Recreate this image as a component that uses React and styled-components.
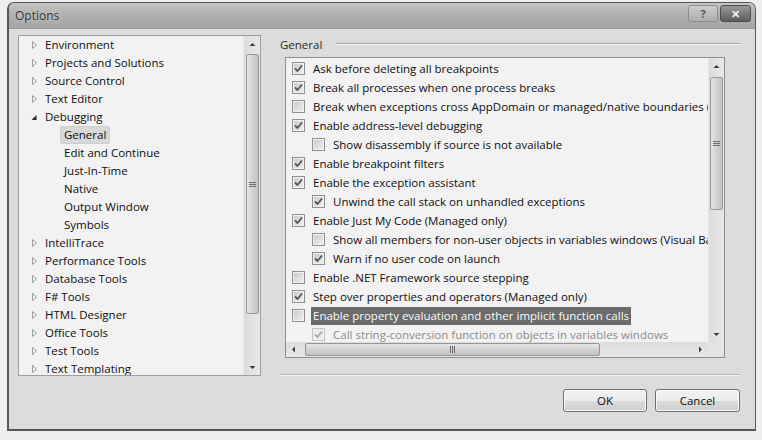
import React from "react";
import styled, { createGlobalStyle } from "styled-components";

const treeItems = [
  { label: "Environment", depth: 0, state: "closed" },
  { label: "Projects and Solutions", depth: 0, state: "closed" },
  { label: "Source Control", depth: 0, state: "closed" },
  { label: "Text Editor", depth: 0, state: "closed" },
  { label: "Debugging", depth: 0, state: "open" },
  { label: "General", depth: 1, selected: true },
  { label: "Edit and Continue", depth: 1 },
  { label: "Just-In-Time", depth: 1 },
  { label: "Native", depth: 1 },
  { label: "Output Window", depth: 1 },
  { label: "Symbols", depth: 1 },
  { label: "IntelliTrace", depth: 0, state: "closed" },
  { label: "Performance Tools", depth: 0, state: "closed" },
  { label: "Database Tools", depth: 0, state: "closed" },
  { label: "F# Tools", depth: 0, state: "closed" },
  { label: "HTML Designer", depth: 0, state: "closed" },
  { label: "Office Tools", depth: 0, state: "closed" },
  { label: "Test Tools", depth: 0, state: "closed" },
  { label: "Text Templating", depth: 0, state: "closed" },
];

const options = [
  { label: "Ask before deleting all breakpoints", checked: true },
  { label: "Break all processes when one process breaks", checked: true },
  {
    label:
      "Break when exceptions cross AppDomain or managed/native boundaries (Managed only)",
  },
  { label: "Enable address-level debugging", checked: true },
  { label: "Show disassembly if source is not available", indent: 1 },
  { label: "Enable breakpoint filters", checked: true },
  { label: "Enable the exception assistant", checked: true },
  { label: "Unwind the call stack on unhandled exceptions", indent: 1, checked: true },
  { label: "Enable Just My Code (Managed only)", checked: true },
  {
    label:
      "Show all members for non-user objects in variables windows (Visual Basic only)",
    indent: 1,
  },
  { label: "Warn if no user code on launch", indent: 1, checked: true },
  { label: "Enable .NET Framework source stepping" },
  { label: "Step over properties and operators (Managed only)", checked: true },
  { label: "Enable property evaluation and other implicit function calls", selected: true },
  {
    label: "Call string-conversion function on objects in variables windows",
    indent: 1,
    checked: true,
    disabled: true,
  },
];

const Expander = ({ state }) => (
  <ExpanderBox>
    {state === "open" && (
      <svg width="10" height="10" viewBox="0 0 10 10">
        <path d="M7.5 3 L7.5 8 L2.5 8 Z" fill="#2a2a2a" />
      </svg>
    )}
    {state === "closed" && (
      <svg width="10" height="10" viewBox="0 0 10 10">
        <path d="M3.5 1.5 L7.5 5 L3.5 8.5 Z" fill="#f4f4f4" stroke="#9a9a9a" />
      </svg>
    )}
  </ExpanderBox>
);

const Arrow = ({ dir }) => {
  const paths = {
    up: "M0.5 4 L3.5 1 L6.5 4 Z",
    down: "M0.5 1 L3.5 4 L6.5 1 Z",
    left: "M4 0.5 L1 3.5 L4 6.5 Z",
    right: "M1 0.5 L4 3.5 L1 6.5 Z",
  };
  const vertical = dir === "up" || dir === "down";
  return (
    <ArrowButton>
      <svg
        width={vertical ? 7 : 5}
        height={vertical ? 5 : 7}
        viewBox={vertical ? "0 0 7 5" : "0 0 5 7"}
      >
        <path d={paths[dir]} fill="#3c3c3c" />
      </svg>
    </ArrowButton>
  );
};

const Grip = ({ vertical }) => (
  <svg width="7" height="7" viewBox="0 0 7 7">
    {vertical ? (
      <path d="M0 1.5 H7 M0 3.5 H7 M0 5.5 H7" stroke="#6a6a6a" strokeWidth="1" />
    ) : (
      <path d="M1.5 0 V7 M3.5 0 V7 M5.5 0 V7" stroke="#6a6a6a" strokeWidth="1" />
    )}
  </svg>
);

const Check = ({ checked, disabled }) => (
  <CheckBox $disabled={disabled}>
    {checked && (
      <svg width="11" height="11" viewBox="0 0 11 11">
        <path
          d="M2 5.5 L4.5 8 L9 2.5"
          fill="none"
          stroke={disabled ? "#a8a8a8" : "#555555"}
          strokeWidth="1.8"
        />
      </svg>
    )}
  </CheckBox>
);

const App = () => {
  return (
    <Page>
      <GlobalStyle />
      <Window>
        <TitleBar>
          <Title>Options</Title>
          <CaptionButton>?</CaptionButton>
          <CaptionButton $close>✕</CaptionButton>
        </TitleBar>
        <Body>
          <Tree>
            <TreeList>
              {treeItems.map((item) => (
                <TreeRow key={item.label} $depth={item.depth}>
                  <Expander state={item.state} />
                  <TreeLabel $selected={item.selected}>{item.label}</TreeLabel>
                </TreeRow>
              ))}
            </TreeList>
            <VScroll>
              <Arrow dir="up" />
              <VThumb $size={260} $offset={2}>
                <Grip vertical />
              </VThumb>
              <Track />
              <Arrow dir="down" />
            </VScroll>
          </Tree>
          <RightPane>
            <SectionHeader>
              <span>General</span>
              <Rule />
            </SectionHeader>
            <ListBox>
              <CheckList>
                {options.map((opt) => (
                  <CheckRow key={opt.label} $indent={opt.indent || 0}>
                    <Check checked={opt.checked} disabled={opt.disabled} />
                    <CheckLabel $selected={opt.selected} $disabled={opt.disabled}>
                      {opt.label}
                    </CheckLabel>
                  </CheckRow>
                ))}
              </CheckList>
              <VScroll $inList>
                <Arrow dir="up" />
                <VThumb $size={133} $offset={3}>
                  <Grip vertical />
                </VThumb>
                <Track />
                <Arrow dir="down" />
              </VScroll>
              <HScroll>
                <Arrow dir="left" />
                <HThumb $size={295} $offset={4}>
                  <Grip />
                </HThumb>
                <Track />
                <Arrow dir="right" />
              </HScroll>
              <Corner />
            </ListBox>
            <Separator />
          </RightPane>
          <Footer>
            <Button $width={84}>OK</Button>
            <Button $width={85}>Cancel</Button>
          </Footer>
        </Body>
      </Window>
    </Page>
  );
};

export default App;

const GlobalStyle = createGlobalStyle`
  html, body {
    margin: 0;
    padding: 0;
    background: #efefef;
  }
  body {
    font-family: "Open Sans", "Liberation Sans", sans-serif;
    font-size: 11.5px;
    color: #0e0e0e;
  }
`;

const Page = styled.div`
  width: 762px;
  height: 440px;
  box-sizing: border-box;
  padding: 2px 0 0 7px;
  overflow: hidden;
`;

const Window = styled.div`
  width: 749px;
  height: 429px;
  box-sizing: border-box;
  display: flex;
  flex-direction: column;
  border: 1px solid #565656;
  border-left-width: 2px;
  border-bottom-width: 2px;
  border-radius: 7px 7px 0 0;
  background: #dcdcdc;
  overflow: hidden;
`;

const TitleBar = styled.div`
  height: 26px;
  flex-shrink: 0;
  display: flex;
  align-items: center;
  gap: 2px;
  padding: 0 4px 0 6px;
  background: linear-gradient(#c6c6c6, #b2b2b2 40%, #a4a4a4);
  border-bottom: 1px solid #999;
  box-sizing: border-box;
`;

const Title = styled.div`
  flex: 1;
  color: #333;
  font-size: 12px;
  text-shadow: 0 0 4px #dcdcdc;
`;

const CaptionButton = styled.div`
  width: ${(p) => (p.$close ? 31 : 30)}px;
  height: 17px;
  margin-top: -4px;
  box-sizing: border-box;
  display: flex;
  align-items: center;
  justify-content: center;
  border: 1px solid ${(p) => (p.$close ? "#4e4e4e" : "#8c8c8c")};
  border-radius: 3px;
  font-size: ${(p) => (p.$close ? 11 : 11)}px;
  font-weight: 700;
  color: ${(p) => (p.$close ? "#f4f4f4" : "#555")};
  background: ${(p) =>
    p.$close
      ? "linear-gradient(#999, #7a7a7a 50%, #5e5e5e)"
      : "linear-gradient(#cdcdcd, #bdbdbd 50%, #adadad)"};
`;

const Body = styled.div`
  flex: 1;
  display: grid;
  grid-template-columns: 243px 460px;
  grid-template-rows: 341px auto;
  column-gap: 19px;
  padding: 6px 0 0 9px;
`;

const Tree = styled.div`
  display: flex;
  border: 1px solid #9e9e9e;
  background: #f2f2f2;
  overflow: hidden;
`;

const TreeList = styled.div`
  flex: 1;
  overflow: hidden;
`;

const TreeRow = styled.div`
  height: 18px;
  display: flex;
  align-items: center;
  padding-left: ${(p) => (p.$depth ? 29 : 10)}px;
  white-space: nowrap;
`;

const ExpanderBox = styled.span`
  width: 10px;
  height: 10px;
  display: flex;
  flex-shrink: 0;
  margin-right: 3px;
`;

const TreeLabel = styled.span`
  padding: 0 3px;
  height: 16px;
  line-height: 16px;
  border: 1px solid ${(p) => (p.$selected ? "#cfcfcf" : "transparent")};
  border-radius: 2px;
  margin-left: -1px;
  background: ${(p) => (p.$selected ? "#d8d8d8" : "transparent")};
`;

const VScroll = styled.div`
  width: ${(p) => (p.$inList ? 16 : 17)}px;
  display: flex;
  flex-direction: column;
  align-items: center;
  background: linear-gradient(90deg, #dcdcdc, #e8e8e8);
  border-left: 1px solid #e6e6e6;
  box-sizing: border-box;
`;

const HScroll = styled.div`
  height: 15px;
  display: flex;
  align-items: center;
  background: linear-gradient(#dcdcdc, #e8e8e8);
`;

const Corner = styled.div`
  background: #e4e4e4;
`;

const ArrowButton = styled.div`
  width: 15px;
  height: 16px;
  display: flex;
  align-items: center;
  justify-content: center;
  flex-shrink: 0;
`;

const Track = styled.div`
  flex: 1;
`;

const VThumb = styled.div`
  width: 13px;
  height: ${(p) => p.$size}px;
  margin-top: ${(p) => p.$offset}px;
  box-sizing: border-box;
  display: flex;
  align-items: center;
  justify-content: center;
  border: 1px solid #969696;
  border-radius: 2px;
  background: linear-gradient(90deg, #e6e6e6, #d2d2d2 50%, #c2c2c2);
`;

const HThumb = styled.div`
  height: 13px;
  width: ${(p) => p.$size}px;
  margin-left: ${(p) => p.$offset}px;
  box-sizing: border-box;
  display: flex;
  align-items: center;
  justify-content: center;
  border: 1px solid #969696;
  border-radius: 2px;
  background: linear-gradient(#e6e6e6, #d2d2d2 50%, #c2c2c2);
`;

const RightPane = styled.div`
  display: flex;
  flex-direction: column;
`;

const SectionHeader = styled.div`
  height: 18px;
  display: flex;
  align-items: center;
  gap: 14px;
  margin-bottom: 4px;
  color: #2a2a2a;
`;

const Rule = styled.div`
  flex: 1;
  border-top: 1px solid #a4a4a4;
  border-bottom: 1px solid #f6f6f6;
`;

const ListBox = styled.div`
  margin-left: 5px;
  width: 440px;
  height: 301px;
  box-sizing: border-box;
  border: 1px solid #8e8e8e;
  background: #f2f2f2;
  display: grid;
  grid-template-columns: 1fr 16px;
  grid-template-rows: 1fr 15px;
  overflow: hidden;
`;

const CheckList = styled.div`
  overflow: hidden;
  padding-top: 1px;
  min-width: 0;
`;

const CheckRow = styled.div`
  height: 19px;
  display: flex;
  align-items: center;
  padding-left: ${(p) => 6 + p.$indent * 20}px;
  white-space: nowrap;
`;

const CheckBox = styled.span`
  width: 13px;
  height: 13px;
  flex-shrink: 0;
  box-sizing: border-box;
  display: flex;
  align-items: center;
  justify-content: center;
  border: 1px solid ${(p) => (p.$disabled ? "#c2c2c2" : "#8f8f8f")};
  background: ${(p) =>
    p.$disabled
      ? "#ececec"
      : "linear-gradient(135deg, #c8c8c8, #e0e0e0 60%, #efefef)"};
  box-shadow: inset 0 0 0 1px #f2f2f2;
  margin-right: 6px;
`;

const CheckLabel = styled.span`
  padding: 0 2px;
  height: 18px;
  line-height: 18px;
  color: ${(p) => (p.$selected ? "#fafafa" : p.$disabled ? "#8c8c8c" : "#0e0e0e")};
  background: ${(p) => (p.$selected ? "#6b6b6b" : "transparent")};
`;

const Separator = styled.div`
  margin-top: auto;
  border-top: 1px solid #b4b4b4;
  border-bottom: 1px solid #f4f4f4;
`;

const Footer = styled.div`
  grid-column: 2;
  display: flex;
  justify-content: flex-end;
  gap: 8px;
  padding-top: 13px;
`;

const Button = styled.button`
  width: ${(p) => p.$width}px;
  height: 23px;
  padding: 0;
  border: 1px solid #707070;
  border-radius: 3px;
  font-family: inherit;
  font-size: 11.5px;
  color: #0e0e0e;
  background: linear-gradient(#f2f2f2, #ebebeb 50%, #dcdcdc 51%, #cdcdcd);
  box-shadow: inset 0 0 0 1px #fafafa;
`;
